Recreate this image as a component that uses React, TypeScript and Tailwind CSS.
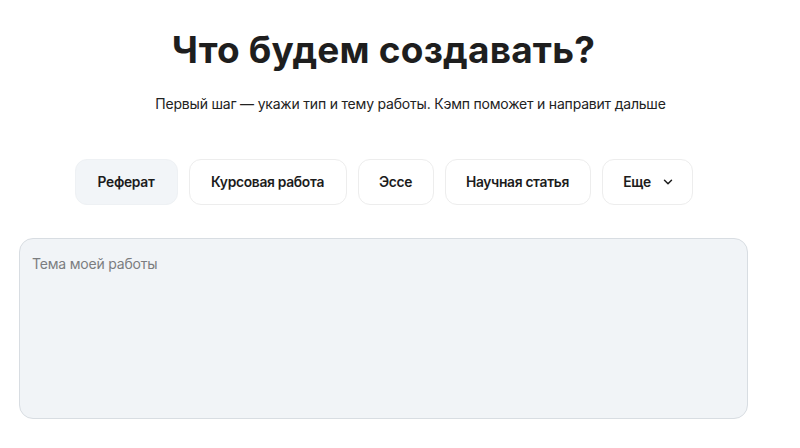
import React, { useState } from 'react';
import { ChevronDown } from 'lucide-react';

const types = [
  { label: 'Реферат', width: 'w-[103px]' },
  { label: 'Курсовая работа', width: 'w-[158px]' },
  { label: 'Эссе', width: 'w-[76px]' },
  { label: 'Научная статья', width: 'w-[146px]' },
];

const App: React.FC = () => {
  const [active, setActive] = useState('Реферат');
  const [topic, setTopic] = useState('');

  return (
    <div
      className="min-h-screen bg-white pl-[19px] pr-[52px] pt-[26px] text-[#1c1c1c]"
      style={{ fontFamily: 'Inter, "Noto Sans", sans-serif' }}
    >
      {/* Header */}
      <div className="flex flex-col items-center">
        <h1 className="text-[37px] font-bold leading-[48px] tracking-[0.2px] text-[#1e1e1e]">Что будем создавать?</h1>
        <p className="mt-[21px] pl-[54px] text-[14px] leading-[18px] tracking-[-0.2px] text-[#222]">
          Первый шаг — укажи тип и тему работы. Кэмп поможет и направит дальше
        </p>
      </div>

      {/* Type selector */}
      <div className="mt-[46px] flex justify-center gap-[11px]">
        {types.map((t) => (
          <button
            key={t.label}
            onClick={() => setActive(t.label)}
            className={`${t.width} h-[46px] rounded-[12px] border text-[13.8px] font-semibold tracking-[-0.3px] ${
              active === t.label ? 'border-[#eef1f4] bg-[#f2f5f8]' : 'border-[#ededed] bg-white'
            }`}
          >
            {t.label}
          </button>
        ))}
        <button className="flex h-[46px] w-[91px] items-center justify-center gap-[10px] rounded-[12px] border border-[#ededed] bg-white pl-[4px] text-[13.8px] font-semibold tracking-[-0.3px]">
          <span>Еще</span>
          <ChevronDown className="h-[14px] w-[14px]" strokeWidth={2.5} />
        </button>
      </div>

      {/* Topic */}
      <textarea
        value={topic}
        onChange={(e) => setTopic(e.target.value)}
        placeholder="Тема моей работы"
        className="mt-[33px] block h-[181px] w-full resize-none rounded-[14px] border-[1.5px] border-[#d8dde2] bg-[#f1f4f7] px-[12px] pt-[16px] text-[14px] leading-[18px] tracking-[-0.2px] text-[#222] outline-none placeholder:text-[#7b7d80]"
      />
    </div>
  );
};

export default App;
